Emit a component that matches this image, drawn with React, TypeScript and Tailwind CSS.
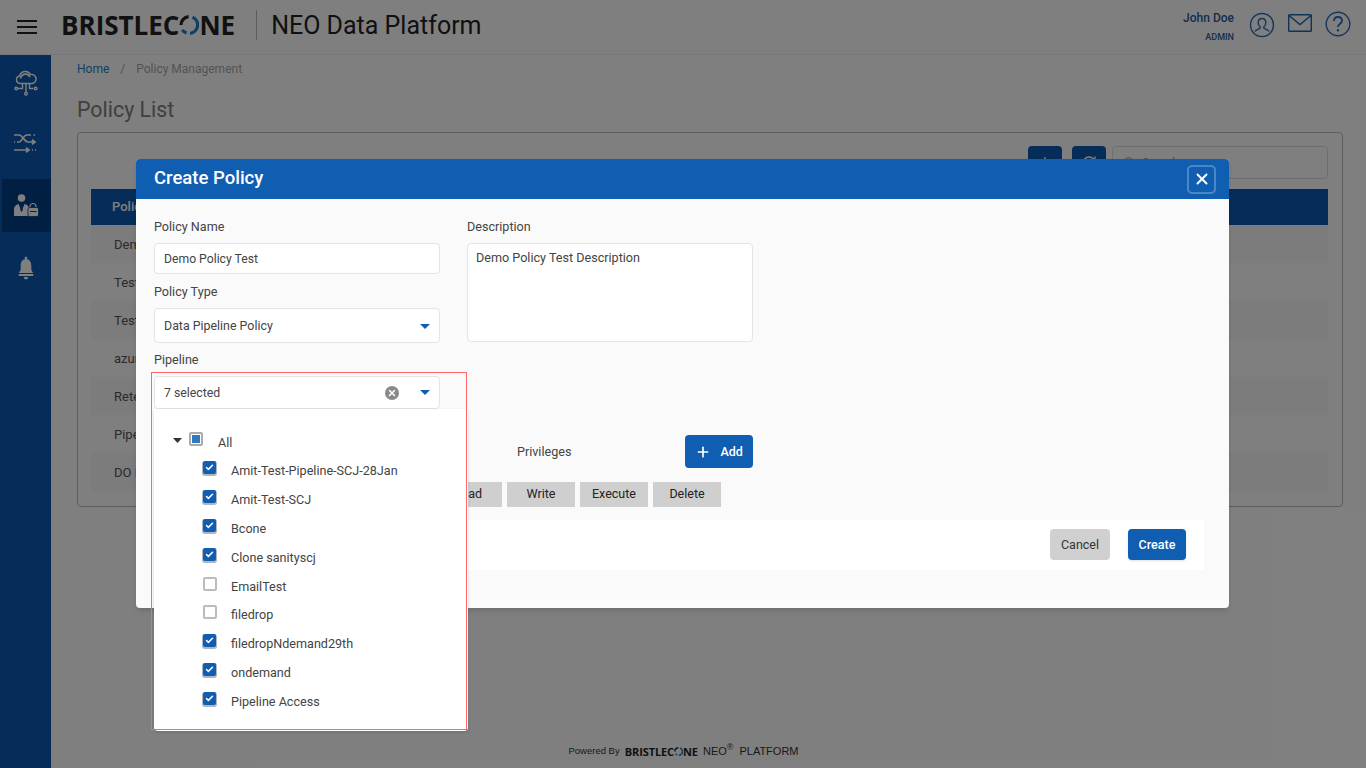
import React from 'react';
import { Plus, X, RefreshCw, Search, Check } from 'lucide-react';

const rows = ['Demo Policy', 'Test One', 'Test Two', 'azure', 'Retention', 'Pipeline', 'DO Full'];

const pipelines = [
  { name: 'Amit-Test-Pipeline-SCJ-28Jan', on: true },
  { name: 'Amit-Test-SCJ', on: true },
  { name: 'Bcone', on: true },
  { name: 'Clone sanityscj', on: true },
  { name: 'EmailTest', on: false },
  { name: 'filedrop', on: false },
  { name: 'filedropNdemand29th', on: true },
  { name: 'ondemand', on: true },
  { name: 'Pipeline Access', on: true },
];

const Caret = () => (
  <svg width="10" height="5" viewBox="0 0 10 5">
    <path d="M0 0h10L5 5z" fill="#105eb2" />
  </svg>
);

const LogoRing = ({ size }: { size: number }) => (
  <svg width={size} height={size} viewBox="0 0 20 20" className="shrink-0">
    <path d="M13.5 2.2A8.4 8.4 0 0 1 11 18.3" fill="none" stroke="#1f7fc4" strokeWidth="3.2" />
    <path d="M7.6 18A8.4 8.4 0 0 1 3.2 14.8" fill="none" stroke="#1f7fc4" strokeWidth="3.2" />
    <path d="M2 10A8.4 8.4 0 0 1 9.6 1.6" fill="none" stroke="#222" strokeWidth="3.2" />
  </svg>
);

const Logo = () => (
  <div className="flex items-center font-['Open_Sans',sans-serif] font-bold text-[26px] leading-none text-[#222] tracking-[0px]">
    <span>BRISTLEC</span>
    <LogoRing size={20} />
    <span>NE</span>
  </div>
);

const SmallLogo = () => (
  <div className="flex items-center font-['Open_Sans',sans-serif] font-bold text-[11px] leading-none text-[#222] tracking-[-0.1px]">
    <span>BRISTLEC</span>
    <LogoRing size={9} />
    <span>NE</span>
  </div>
);

const CloudIcon = () => (
  <svg width="26" height="26" viewBox="0 0 26 26" fill="none" stroke="#fff" strokeWidth="1.400">
    <path d="M7 13.500a3.800 3.800 0 0 1-.5-7.500A6 6 0 0 1 17.500 4.500a4.600 4.600 0 0 1 2 9z" />
    <path d="M7.500 8.500a5 5 0 0 1 9.500-1.500" strokeWidth="1.800" />
    <path d="M13 13.500v8.500M9.500 13.500v5H4.500M16.500 13.500v5h4" />
    <circle cx="13" cy="23.700" r="1.300" />
    <circle cx="3.200" cy="18.500" r="1.300" />
    <circle cx="22.700" cy="18.500" r="1.300" />
  </svg>
);

const ShuffleIcon = () => (
  <svg width="24" height="20" viewBox="0 0 24 20" fill="none" stroke="#fff" strokeWidth="1.700">
    <path d="M1 2h5c4 0 5 7 9 7h7M19 6.800l3 2.200-3 2.200" />
    <path d="M1 9h1M4 9h2c3 0 4-7 8-7h4M20.500 2h1.500" />
    <path d="M1 17h15M13 14.800l3 2.200-3 2.200M19 17h1M22 17h1" />
  </svg>
);

const UserLockIcon = () => (
  <svg width="25" height="23" viewBox="0 0 25 23" fill="#fff">
    <circle cx="7.500" cy="4" r="3.800" />
    <path d="M0 22v-6.500c0-3 2-5 4.500-5.500l3 7.500 3-7.500c2.500.5 4 2 4.500 4V22z" />
    <path d="M6.500 10.500h2l-.5 1.500.8 4-1.300 2-1.300-2 .8-4z" fill="#0b4a97" />
    <path d="M16 14v-1.500a3 3 0 0 1 6 0V14" fill="none" stroke="#fff" strokeWidth="1.200" />
    <rect x="14" y="13.500" width="10.500" height="9" rx="1.500" stroke="#003f85" strokeWidth="0.800" />
    <rect x="16" y="17" width="6.500" height="1" fill="#003f85" />
  </svg>
);

const BellIcon = () => (
  <svg width="16" height="24" viewBox="0 0 18 24" fill="#fff" preserveAspectRatio="none">
    <circle cx="9" cy="2" r="1.500" />
    <path d="M9 3c4 0 6 3 6 7v4l2 3H1l2-3v-4c0-4 2-7 6-7z" />
    <rect x="0.500" y="18" width="17" height="2" rx="1" />
    <path d="M6.500 21h5a2.500 2.500 0 0 1-5 0z" />
  </svg>
);

const PipelineCheck = ({ on }: { on: boolean }) =>
  on ? (
    <span className="flex h-[13px] w-[13px] items-center justify-center rounded-[2px] bg-[#105eb2] shadow-[0_1px_0_1px_#b0b6bf]">
      <Check size={9} color="#fff" strokeWidth={4} />
    </span>
  ) : (
    <span className="h-[14px] w-[14px] rounded-[2px] border-2 border-[#bbb] bg-white" />
  );

const Label = ({ children }: { children: React.ReactNode }) => (
  <label className="block h-[20px] text-[12.600px] leading-[20px] text-[#444]">{children}</label>
);

export default function App() {
  return (
    <div className="relative flex h-screen w-full flex-col overflow-hidden bg-white font-['Roboto',sans-serif]">
      <header className="flex h-[55px] shrink-0 items-center border-b border-[#eee] bg-white pb-[4px] pl-[17px] pr-[15px]">
        <div className="mt-[4px] flex w-[20px] flex-col gap-[4px]">
          <span className="h-[2px] bg-[#222]" />
          <span className="h-[2px] bg-[#222]" />
          <span className="h-[2px] bg-[#222]" />
        </div>
        <div className="ml-[24px]">
          <Logo />
        </div>
        <div className="ml-[21px] h-[30px] w-px bg-[#bbb]" />
        <div className="ml-[14px] text-[25px] leading-none text-[#222]">NEO Data Platform</div>
        <div className="ml-auto flex items-center">
          <div className="mt-[4px] text-right text-[#2a5aa0]">
            <div className="text-[12px] font-medium leading-[14px]">John Doe</div>
            <div className="mt-[6px] text-[9px] font-medium leading-[12px]">ADMIN</div>
          </div>
          <svg className="ml-[15px]" width="26" height="26" viewBox="0 0 26 26" fill="none" stroke="#2d6db5" strokeWidth="1.400">
            <circle cx="13" cy="13" r="11.500" />
            <path d="M13 6.500c-2.500 0-3.800 2-3.800 4.200 0 2 1 3.500 2 4.300v1l-4.200 2.300c-.6.400-.8.800-.9 1.200M13 6.500c2.500 0 3.800 2 3.800 4.200 0 2-1 3.500-2 4.300v1l4.200 2.300c.6.400.8.800.9 1.200" />
          </svg>
          <svg className="ml-[13px] -translate-y-[2px]" width="24" height="18" viewBox="0 0 24 18" fill="none" stroke="#1f62ad" strokeWidth="1.400">
            <rect x="0.700" y="0.700" width="22.600" height="16.600" rx="0.800" />
            <path d="M1 1.500l11 9 11-9" />
          </svg>
          <svg className="ml-[13px] -translate-y-[1px]" width="26" height="26" viewBox="0 0 26 26" fill="none" stroke="#2d6db5" strokeWidth="1.400">
            <circle cx="13" cy="13" r="11.800" />
            <path d="M9 10c0-2.500 1.800-4 4-4s4 1.500 4 3.800c0 3-4 3-4 6.200" strokeWidth="1.800" />
            <circle cx="13" cy="19.200" r="1.200" fill="#2d6db5" stroke="none" />
          </svg>
        </div>
      </header>

      <div className="flex min-h-0 flex-1">
        <aside className="flex w-[51px] shrink-0 flex-col bg-[#0c59b2] pl-[2px] pt-[1px]">
          <div className="flex h-[53px] items-center justify-center pr-[2px]"><CloudIcon /></div>
          <div className="mt-[7px] flex h-[53px] items-center justify-center pr-[3px]"><ShuffleIcon /></div>
          <div className="mt-[10px] flex h-[53px] items-center justify-center bg-[#003f85] pr-[1px]"><UserLockIcon /></div>
          <div className="mt-[9px] flex h-[53px] items-center justify-center pr-[2px]"><BellIcon /></div>
        </aside>

        <main className="flex min-w-0 flex-1 flex-col pl-[26px] pr-[23px]">
          <div className="mt-[6px] flex h-[16px] items-center text-[12px] text-[#a6a6a6]">
            <span className="text-[#2a7fc5]">Home</span>
            <span className="mx-[11px]">/</span>
            <span>Policy Management</span>
          </div>
          <h1 className="mt-[18px] text-[21.400px] font-normal leading-[30px] text-[#808080]">Policy List</h1>
          <section className="mt-[7px] h-[375px] rounded-[4px] border border-[#bbb] pl-[13px] pr-[14px] pt-[13px]">
            <div className="flex h-[33px] justify-end gap-[10px]">
              <button className="flex h-[34px] w-[34px] items-center justify-center rounded-[4px] bg-[#0c59b2]">
                <Plus size={18} color="#fff" />
              </button>
              <button className="flex h-[34px] w-[34px] items-center justify-center rounded-[4px] bg-[#0c59b2]">
                <RefreshCw size={16} color="#fff" />
              </button>
              <div className="ml-[-4px] flex h-[33px] w-[216px] items-center gap-[6px] rounded-[4px] border border-[#ddd] bg-white pl-[9px] text-[12px] text-[#999]">
                <Search size={14} />
                <span>Search</span>
              </div>
            </div>
            <div className="mt-[10px] flex h-[36px] items-center bg-[#0c59b2] pl-[21px] text-[13px] font-medium text-white">
              Policy Name
            </div>
            <div>
              {rows.map((r, i) => (
                <div
                  key={r}
                  className={`flex h-[38px] items-center pl-[23px] pt-[1px] text-[13px] text-[#555] ${i % 2 === 0 ? 'bg-[#f8f8f8]' : ''}`}
                >
                  {r}
                </div>
              ))}
            </div>
          </section>
          <footer className="mt-auto flex h-[34px] items-center justify-center pr-[53px] font-['Liberation_Sans',sans-serif] text-[#333]">
            <span className="mr-[5px] text-[9.500px]">Powered By</span>
            <SmallLogo />
            <span className="ml-[5px] text-[11px]">NEO</span>
            <sup className="text-[9px]">®</sup>
            <span className="ml-[6px] text-[11px]">PLATFORM</span>
          </footer>
        </main>
      </div>

      <div className="absolute inset-0 bg-black/50" />

      <div className="absolute left-[136px] top-[159px] h-[449px] w-[1093px] rounded-[4px] bg-[#fafafa] shadow-md">
        <div className="flex h-[40px] items-center justify-between rounded-t-[4px] bg-[#105eb2] pl-[18px] pr-[13px] text-white">
          <h2 className="pb-[2px] text-[18.500px] font-medium leading-none">Create Policy</h2>
          <button className="flex h-[29px] w-[29px] items-center justify-center rounded-[5px] border-2 border-white/25">
            <X size={18} color="#fff" strokeWidth={2.500} />
          </button>
        </div>

        <div className="px-[18px] pt-[18px]">
          <div className="flex gap-[27px]">
            <div className="w-[286px]">
              <Label>Policy Name</Label>
              <div className="mt-[6px] flex h-[31px] items-center rounded-[4px] border border-[#e4e4e4] bg-white pl-[9px] pt-[1px] text-[12.200px] text-[#444]">
                Demo Policy Test
              </div>
              <div className="mt-[8px]"><Label>Policy Type</Label></div>
              <div className="mt-[6px] flex h-[35px] items-center justify-between rounded-[4px] border border-[#e4e4e4] bg-white pl-[9px] pr-[9px] pt-[1px] text-[12.400px] text-[#444]">
                Data Pipeline Policy
                <Caret />
              </div>
              <div className="mt-[7px]"><Label>Pipeline</Label></div>
              <div className="relative mt-[6px]">
                <div className="flex h-[33px] items-center rounded-[4px] border border-[#e4e4e4] bg-white pl-[9px] pr-[9px] text-[12.300px] text-[#444]">
                  <span className="pt-[1px]">7 selected</span>
                  <span className="ml-auto mr-[21px] flex h-[14px] w-[14px] items-center justify-center rounded-full bg-[#8a8a8a]">
                    <X size={10} color="#fff" strokeWidth={3.500} />
                  </span>
                  <Caret />
                </div>
                <div className="absolute left-0 top-full z-10 h-[322px] w-[314px] rounded-b-[4px] bg-white pl-[19px] pt-[23px] text-[12.600px] text-[#444] shadow-[0_1px_3px_rgba(0,0,0,0.15)]">
                  <div className="flex h-[18px] items-start">
                    <svg className="mt-[6px]" width="9" height="5" viewBox="0 0 9 5">
                      <path d="M0 0h9L4.500 5z" fill="#333" />
                    </svg>
                    <span className="ml-[7px] flex h-[14px] w-[14px] items-center justify-center rounded-[2px] border-2 border-[#aaa] bg-white">
                      <span className="h-[8px] w-[8px] bg-[#2f7abf]" />
                    </span>
                    <span className="ml-[15px] mt-[2px] leading-[18px]">All</span>
                  </div>
                  <div className="mt-[11px] pl-[30px]">
                    {pipelines.map((p) => (
                      <div key={p.name} className="flex h-[28.900px] items-start">
                        <PipelineCheck on={p.on} />
                        <span className={`mt-[3px] leading-[14px] ${p.on ? 'ml-[15px]' : 'ml-[14px]'}`}>{p.name}</span>
                      </div>
                    ))}
                  </div>
                </div>
                <div className="pointer-events-none absolute -left-[3px] -top-[4px] z-20 h-[358px] w-[316px] border border-[#ff6666]" />
              </div>
            </div>
            <div className="w-[286px]">
              <Label>Description</Label>
              <div className="mt-[6px] h-[99px] rounded-[4px] border border-[#e4e4e4] bg-white pl-[8px] pt-[6px] text-[12.600px] leading-[16px] text-[#444]">
                Demo Policy Test Description
              </div>
            </div>
          </div>

          <div className="mt-[26px] flex h-[33px] items-center">
            <span className="ml-[363px] pt-[1px] text-[12.600px] text-[#444]">Privileges</span>
            <button className="ml-[114px] flex h-[33px] w-[68px] items-center rounded-[4px] bg-[#105eb2] pl-[10px] text-[12.500px] font-medium text-white">
              <Plus size={16} strokeWidth={2.500} />
              <span className="ml-[9px] pt-[2px]">Add</span>
            </button>
          </div>
          <div className="ml-[280px] mt-[14px] flex gap-[5px]">
            {['Read', 'Write', 'Execute', 'Delete'].map((p) => (
              <span key={p} className="flex h-[25px] w-[68px] items-center justify-center bg-[#cfcfcf] text-[12.500px] text-[#222]">
                {p}
              </span>
            ))}
          </div>
          <div className="mt-[13px] flex h-[50px] w-[1050px] items-start justify-end gap-[18px] bg-white pr-[18px] pt-[9px]">
            <button className="h-[31px] w-[60px] rounded-[4px] bg-[#d0d0d0] pt-[1px] text-[12.500px] text-[#333]">Cancel</button>
            <button className="h-[31px] w-[58px] rounded-[4px] bg-[#105eb2] pt-[1px] text-[12.500px] font-medium text-white shadow-sm">Create</button>
          </div>
        </div>
      </div>
    </div>
  );
}
